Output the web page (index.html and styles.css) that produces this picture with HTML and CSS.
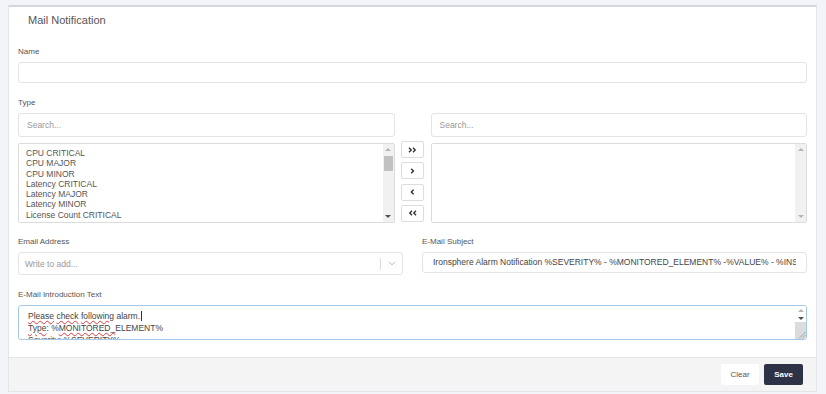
FILE: index.html
```html
<!DOCTYPE html>
<html>
<head>
<meta charset="utf-8">
<title>Mail Notification</title>
<link rel="stylesheet" href="styles.css">
</head>
<body>
<div class="card">
  <div class="card-header"><span class="title">Mail Notification</span></div>
  <div class="card-body">
    <div class="field field-name">
      <label class="label">Name</label>
      <div class="input input-name"></div>
    </div>
    <div class="field field-type">
      <label class="label">Type</label>
      <div class="dual">
        <div class="input input-search"><span class="placeholder">Search...</span></div>
        <div class="spacer"></div>
        <div class="input input-search"><span class="placeholder">Search...</span></div>
        <div class="listbox">
          <ul class="list-items">
            <li>CPU CRITICAL</li>
            <li>CPU MAJOR</li>
            <li>CPU MINOR</li>
            <li>Latency CRITICAL</li>
            <li>Latency MAJOR</li>
            <li>Latency MINOR</li>
            <li>License Count CRITICAL</li>
          </ul>
          <div class="scrollbar">
            <div class="sb-arrow"><span class="tri-up light"></span></div>
            <div class="sb-thumb"></div>
            <div class="sb-track"></div>
            <div class="sb-arrow"><span class="tri-down"></span></div>
          </div>
        </div>
        <div class="move-btns">
          <button class="move-btn"><svg width="9" height="6" viewBox="0 0 9 6"><path d="M1 0.8 L3.2 3 L1 5.2 M5 0.8 L7.2 3 L5 5.2" fill="none" stroke="#333" stroke-width="1.4"/></svg></button>
          <button class="move-btn"><svg width="5" height="6" viewBox="0 0 5 6"><path d="M1.2 0.8 L3.4 3 L1.2 5.2" fill="none" stroke="#333" stroke-width="1.4"/></svg></button>
          <button class="move-btn"><svg width="5" height="6" viewBox="0 0 5 6"><path d="M3.6 0.8 L1.4 3 L3.6 5.2" fill="none" stroke="#333" stroke-width="1.4"/></svg></button>
          <button class="move-btn"><svg width="9" height="6" viewBox="0 0 9 6"><path d="M4 0.8 L1.8 3 L4 5.2 M8 0.8 L5.8 3 L8 5.2" fill="none" stroke="#333" stroke-width="1.4"/></svg></button>
        </div>
        <div class="listbox">
          <ul class="list-items"></ul>
          <div class="scrollbar">
            <div class="sb-arrow"><span class="tri-up light"></span></div>
            <div class="sb-track"></div>
            <div class="sb-arrow"><span class="tri-down light"></span></div>
          </div>
        </div>
      </div>
    </div>
    <div class="row2">
      <div class="field">
        <label class="label">Email Address</label>
        <div class="input input-email">
          <span class="placeholder ph-email">Write to add...</span>
          <span class="sep"></span>
          <span class="chev"><svg width="8" height="5" viewBox="0 0 8 5"><path d="M0.8 0.8 L4 3.8 L7.2 0.8" fill="none" stroke="#bbb" stroke-width="1"/></svg></span>
        </div>
      </div>
      <div class="field">
        <label class="label">E-Mail Subject</label>
        <div class="input input-subject"><div class="subject-text">Ironsphere Alarm Notification %SEVERITY% - %MONITORED_ELEMENT% -%VALUE% - %INSTANCE%</div></div>
      </div>
    </div>
    <div class="field">
      <label class="label">E-Mail Introduction Text</label>
      <div class="textarea">
        <div class="ta-text">
          <div><span class="spell">Please</span> <span class="spell">check</span> <span class="spell">following</span> alarm.<span class="caret"></span></div>
          <div><span class="spell">Type</span>: %<span class="spell">MONITORED_</span>ELEMENT%</div>
          <div>Severity: %SEVERITY%</div>
        </div>
        <div class="ta-scroll">
          <div class="ta-arrow"><span class="tri-up light"></span></div>
          <div class="ta-arrow"><span class="tri-down"></span></div>
          <div class="ta-corner"><svg width="9" height="9" viewBox="0 0 9 9"><path d="M8.5 2 L2 8.5 M8.5 5 L5 8.5" stroke="#999" stroke-width="0.8"/></svg></div>
        </div>
      </div>
    </div>
  </div>
  <div class="card-footer">
    <button class="btn btn-clear">Clear</button>
    <button class="btn btn-save">Save</button>
  </div>
</div>
</body>
</html>
```

FILE: styles.css
```css
* { box-sizing: border-box; }
html, body { margin: 0; }
body {
  background: #f2f4f7;
  padding: 5px 9px 0 8px;
  height: 394px;
  overflow: hidden;
  font-family: "Liberation Sans", Arial, sans-serif;
}
.card {
  background: #fff;
  border: 1px solid #e2e5e9;
  border-top: 2px solid #d0d8de;
  height: 387px;
  display: flex;
  flex-direction: column;
  min-width: 0;
}
.card-header {
  height: 31px;
  display: flex;
  align-items: flex-start;
  padding: 6px 0 0 19px;
  line-height: 14px;
}
.title {
  display: block;
  font-family: "Liberation Sans", Arial, sans-serif;
  font-size: 11px;
  color: #555;
}
.card-body {
  flex: 1;
  min-width: 0;
  padding: 9px 9px 0 9px;
}
.field { min-width: 0; }
.label {
  display: block;
  font-size: 8px;
  line-height: 10px;
  color: #555;
  margin-bottom: 5px;
}
.input {
  border: 1px solid #e4e4e4;
  border-radius: 3px;
  background: #fff;
  font-size: 8.5px;
  color: #444;
}
.placeholder { color: #999; }
.input-name { height: 21px; }
.field-name { margin-bottom: 15px; }
.field-type { margin-bottom: 14px; }
.dual {
  display: grid;
  grid-template-columns: minmax(0, 1fr) 36px minmax(0, 1fr);
  grid-template-rows: 24px 80px;
  row-gap: 6px;
}
.input-search {
  display: flex;
  align-items: center;
  padding-left: 8px;
}
.listbox {
  border: 1px solid #dcdcdc;
  border-radius: 2px;
  display: flex;
  overflow: hidden;
}
.list-items {
  flex: 1;
  list-style: none;
  margin: 0;
  padding: 4px 0 0 7px;
  font-size: 8.5px;
  line-height: 10.25px;
  color: #555;
}
.scrollbar {
  width: 11px;
  background: #f1f1f1;
  display: flex;
  flex-direction: column;
}
.sb-arrow {
  height: 11px;
  display: flex;
  align-items: center;
  justify-content: center;
}
.sb-thumb {
  height: 15px;
  margin: 1px 1px 0 1px;
  background: #c1c1c1;
}
.sb-track { flex: 1; }
.tri-up {
  width: 0; height: 0;
  border-left: 3px solid transparent;
  border-right: 3px solid transparent;
  border-bottom: 3px solid #505050;
}
.tri-down {
  width: 0; height: 0;
  border-left: 3px solid transparent;
  border-right: 3px solid transparent;
  border-top: 3px solid #505050;
}
.tri-up.light { border-bottom-color: #b5b5b5; }
.tri-down.light { border-top-color: #b5b5b5; }
.move-btns {
  margin-top: -2px;
  height: 81px;
  display: flex;
  flex-direction: column;
  justify-content: space-between;
  align-items: center;
}
.move-btn {
  width: 23px;
  height: 17px;
  padding: 0;
  border: 1px solid #ddd;
  border-radius: 2px;
  background: #fff;
  display: flex;
  align-items: center;
  justify-content: center;
}
.row2 {
  display: grid;
  grid-template-columns: minmax(0, 1fr) minmax(0, 1fr);
  column-gap: 19px;
  margin-bottom: 15px;
}
.input-email {
  height: 23px;
  display: flex;
  align-items: center;
  padding-left: 6px;
}
.ph-email { flex: 1; }
.sep {
  width: 1px;
  height: 12px;
  background: #ddd;
}
.chev {
  width: 21px;
  display: flex;
  justify-content: center;
  align-items: center;
}
.input-subject {
  height: 21px;
  padding: 0 10px;
}
.subject-text {
  line-height: 19px;
  white-space: nowrap;
  overflow: hidden;
}
.textarea {
  height: 35px;
  border: 1px solid #a6c8e8;
  border-radius: 3px;
  display: flex;
  overflow: hidden;
}
.ta-text {
  flex: 1;
  padding: 4px 0 0 9px;
  font-size: 8.5px;
  line-height: 12px;
  color: #444;
  overflow: hidden;
}
.spell {
  text-decoration: underline wavy #e0393e;
  text-decoration-thickness: 1px;
  text-underline-offset: 1px;
}
.caret {
  display: inline-block;
  width: 1px;
  height: 10px;
  background: #333;
  vertical-align: -2px;
  margin-left: 1px;
}
.ta-scroll {
  width: 11px;
  display: flex;
  flex-direction: column;
  background: #fff;
}
.ta-arrow {
  height: 8px;
  display: flex;
  align-items: center;
  justify-content: center;
}
.ta-corner {
  flex: 1;
  background: #dcdcdc;
  display: flex;
  align-items: flex-end;
  justify-content: flex-end;
}
.card-footer {
  height: 34px;
  border-top: 1px solid #e6e6e6;
  background: #f4f4f4;
  display: flex;
  justify-content: flex-end;
  align-items: center;
  gap: 5px;
  padding-right: 13px;
}
.btn {
  height: 21px;
  border: none;
  border-radius: 2px;
  font-family: "Liberation Sans", Arial, sans-serif;
  font-size: 8px;
  padding: 0;
}
.btn-clear { width: 38px; background: #fff; color: #555; }
.btn-save { width: 39px; background: #2e3246; color: #fff; font-weight: bold; }
```
